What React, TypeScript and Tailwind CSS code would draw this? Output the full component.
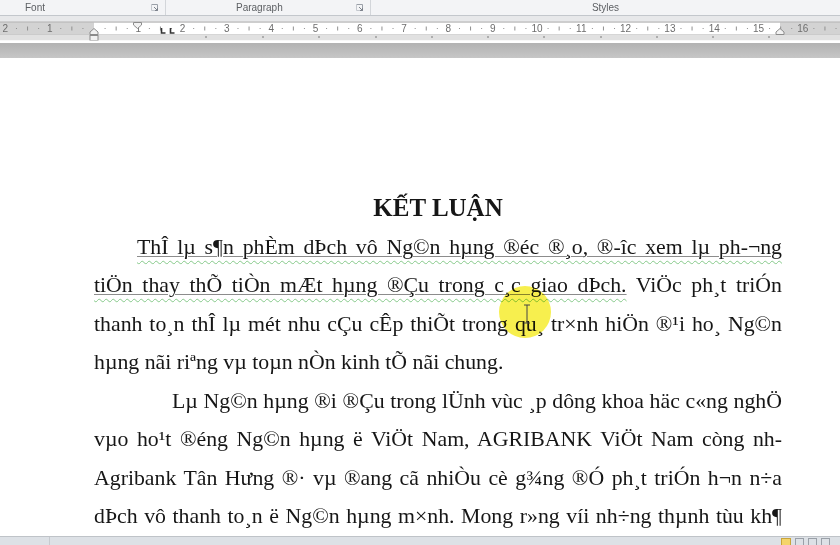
import React from 'react';

const CM = 44.3;
const ZERO = 94;

function Launcher() {
  return (
    <svg width="8" height="8" viewBox="0 0 8 8" className="block">
      <path d="M0.5 0.5h6v6" fill="none" stroke="#9aa0a8" strokeWidth="1" />
      <path d="M0.5 0.5v6h6" fill="none" stroke="#c4c8ce" strokeWidth="1" />
      <path d="M3 3l3.5 3.5M4 6.5h2.5V4" fill="none" stroke="#7d838c" strokeWidth="1" />
    </svg>
  );
}

function Ruler() {
  const nums: { x: number; label: string }[] = [];
  const marks: { x: number; kind: 'dot' | 'tick' }[] = [];
  for (let n = -2; n <= 16; n++) {
    const x = ZERO + n * CM;
    if (n !== 0) nums.push({ x, label: String(Math.abs(n)) });
    [0.25, 0.5, 0.75].forEach((f) => marks.push({ x: x + f * CM, kind: f === 0.5 ? 'tick' : 'dot' }));
  }
  const tabs = [206, 263, 319, 376, 432, 488, 544, 601, 657, 713, 769];
  return (
    <svg width="840" height="27" viewBox="0 0 840 27" className="block">
      <rect x="0" y="0" width="840" height="6" fill="#e7e8ea" />
      <rect x="0" y="6" width="840" height="13" fill="#d3d3d3" />
      <rect x={ZERO} y="6.5" width={780 - ZERO} height="12" fill="#ffffff" />
      <line x1="0" y1="6" x2="840" y2="6" stroke="#b3b3b3" />
      <line x1="0" y1="19" x2="840" y2="19" stroke="#c2c2c2" />
      {marks.map((m, i) =>
        m.kind === 'dot' ? (
          <rect key={i} x={m.x - 0.5} y="12" width="1" height="1" fill="#909090" />
        ) : (
          <rect key={i} x={m.x - 0.5} y="10.5" width="1" height="4" fill="#909090" />
        ),
      )}
      {nums.map((n) => (
        <text key={n.label + n.x} x={n.x} y="16" textAnchor="middle" fontSize="10" fill="#6e6e6e" fontFamily="Liberation Sans, sans-serif">
          {n.label}
        </text>
      ))}
      {/* first line indent */}
      <path d="M133.5 6.5h8v2.5l-4 3.5l-4-3.5z" fill="#f2f2f2" stroke="#8c8c8c" />
      {/* hanging + left indent */}
      <path d="M90 18.5v-2.5l4-3.5l4 3.5v2.5z" fill="#f2f2f2" stroke="#8c8c8c" />
      {/* tabs */}
      <path d="M161.5 12v5h4" fill="none" stroke="#333" strokeWidth="1.6" />
      <path d="M170.5 12v5h4" fill="none" stroke="#333" strokeWidth="1.6" />
      {/* right indent */}
      <path d="M776 18.5v-2.5l4-3.5l4 3.5v2.5z" fill="#f2f2f2" stroke="#8c8c8c" />
      {/* tab strip */}
      <rect x="0" y="19.5" width="840" height="5" fill="#e1e1e1" />
      <rect x="90" y="19.5" width="8" height="5" fill="#f2f2f2" stroke="#8c8c8c" />
      {tabs.map((t) => (
        <rect key={t} x={t - 0.5} y="20" width="1" height="2" fill="#7a7a7a" />
      ))}
      <rect x="0" y="24.5" width="840" height="2.5" fill="#ffffff" />
    </svg>
  );
}

const J = 'text-justify [text-align-last:justify] whitespace-nowrap';

function Marked({ children }: { children: React.ReactNode }) {
  return (
    <span className="underline decoration-wavy decoration-[#86c98a] decoration-1 underline-offset-[6px]">
      <span className="underline decoration-[#8c8c8c] decoration-1 underline-offset-[2px]">{children}</span>
    </span>
  );
}

export default function App() {
  return (
    <div className="w-[840px] h-[545px] overflow-hidden bg-white flex flex-col relative font-['Liberation_Sans',sans-serif]">
      <div className="h-[16px] shrink-0 flex bg-[#f3f4f6] border-b border-[#c3c7cc] text-[10px] leading-[14px] text-[#5c5f63]">
        <div className="w-[166px] flex items-center justify-between pl-[25px] pr-[6px] border-r border-[#d3d6da]">
          <span>Font</span>
          <Launcher />
        </div>
        <div className="w-[205px] flex items-center justify-between pl-[70px] pr-[6px] border-r border-[#d3d6da]">
          <span>Paragraph</span>
          <Launcher />
        </div>
        <div className="flex-1 flex items-center justify-center">
          <span>Styles</span>
        </div>
      </div>

      <Ruler />

      <div className="h-[15px] shrink-0 bg-gradient-to-b from-[#b2b2b2] to-[#c6c6c6]" />

      <div className="flex-1 bg-white pl-[94px] pt-[131px] font-['Liberation_Serif',serif] text-[21.8px] leading-[38.5px] text-[#161616]">
        <div className="w-[688px]">
          <div className="text-center font-bold text-[25px]">KẾT LUẬN</div>
          <div className={`${J} pl-[43px]`}>
            <Marked>ThÎ lµ s¶n phÈm dÞch vô Ng©n hµng ®éc ®¸o, ®-îc xem lµ ph-¬ng</Marked>
          </div>
          <div className={J}>
            <Marked>tiÖn thay thÕ tiÒn mÆt hµng ®Çu trong c¸c giao dÞch.</Marked> ViÖc ph¸t triÓn
          </div>
          <div className={J}>thanh to¸n thÎ lµ mét nhu cÇu cÊp thiÕt trong qu¸ tr×nh hiÖn ®¹i ho¸ Ng©n</div>
          <div className="whitespace-nowrap">hµng nãi riªng vµ toµn nÒn kinh tÕ nãi chung.</div>
          <div className={`${J} pl-[78px]`}>Lµ Ng©n hµng ®i ®Çu trong lÜnh vùc ¸p dông khoa häc c«ng nghÖ</div>
          <div className={J}>vµo ho¹t ®éng Ng©n hµng ë ViÖt Nam, AGRIBANK ViÖt Nam còng nh-</div>
          <div className={J}>Agribank Tân Hưng ®· vµ ®ang cã nhiÒu cè g¾ng ®Ó ph¸t triÓn h¬n n÷a</div>
          <div className={J}>dÞch vô thanh to¸n ë Ng©n hµng m×nh. Mong r»ng víi nh÷ng thµnh tùu kh¶</div>
        </div>
      </div>

      <div className="h-[9px] shrink-0 bg-[#dde1e6] border-t border-[#bfc3c8] flex items-start">
        <div className="w-[50px] h-full border-r border-[#c6cacf]" />
        <div className="flex-1" />
        <div className="flex gap-[4px] pr-[10px] pt-[1px]">
          <div className="w-[10px] h-[8px] bg-[#f4d46a] border border-[#c9a43a]" />
          <div className="w-[9px] h-[8px] border border-[#9aa0a8]" />
          <div className="w-[9px] h-[8px] border border-[#9aa0a8]" />
          <div className="w-[9px] h-[8px] border border-[#9aa0a8]" />
        </div>
      </div>

      {/* cursor highlight */}
      <div className="absolute left-[499px] top-[286px] w-[52px] h-[52px] rounded-full bg-[#f6ee3a] opacity-90 mix-blend-multiply pointer-events-none" />
      <svg className="absolute left-[523px] top-[304px] pointer-events-none" width="8" height="20" viewBox="0 0 8 20">
        <path d="M1 1h6M4 1v18M1 19h6" fill="none" stroke="#444" strokeWidth="1" />
      </svg>
    </div>
  );
}
